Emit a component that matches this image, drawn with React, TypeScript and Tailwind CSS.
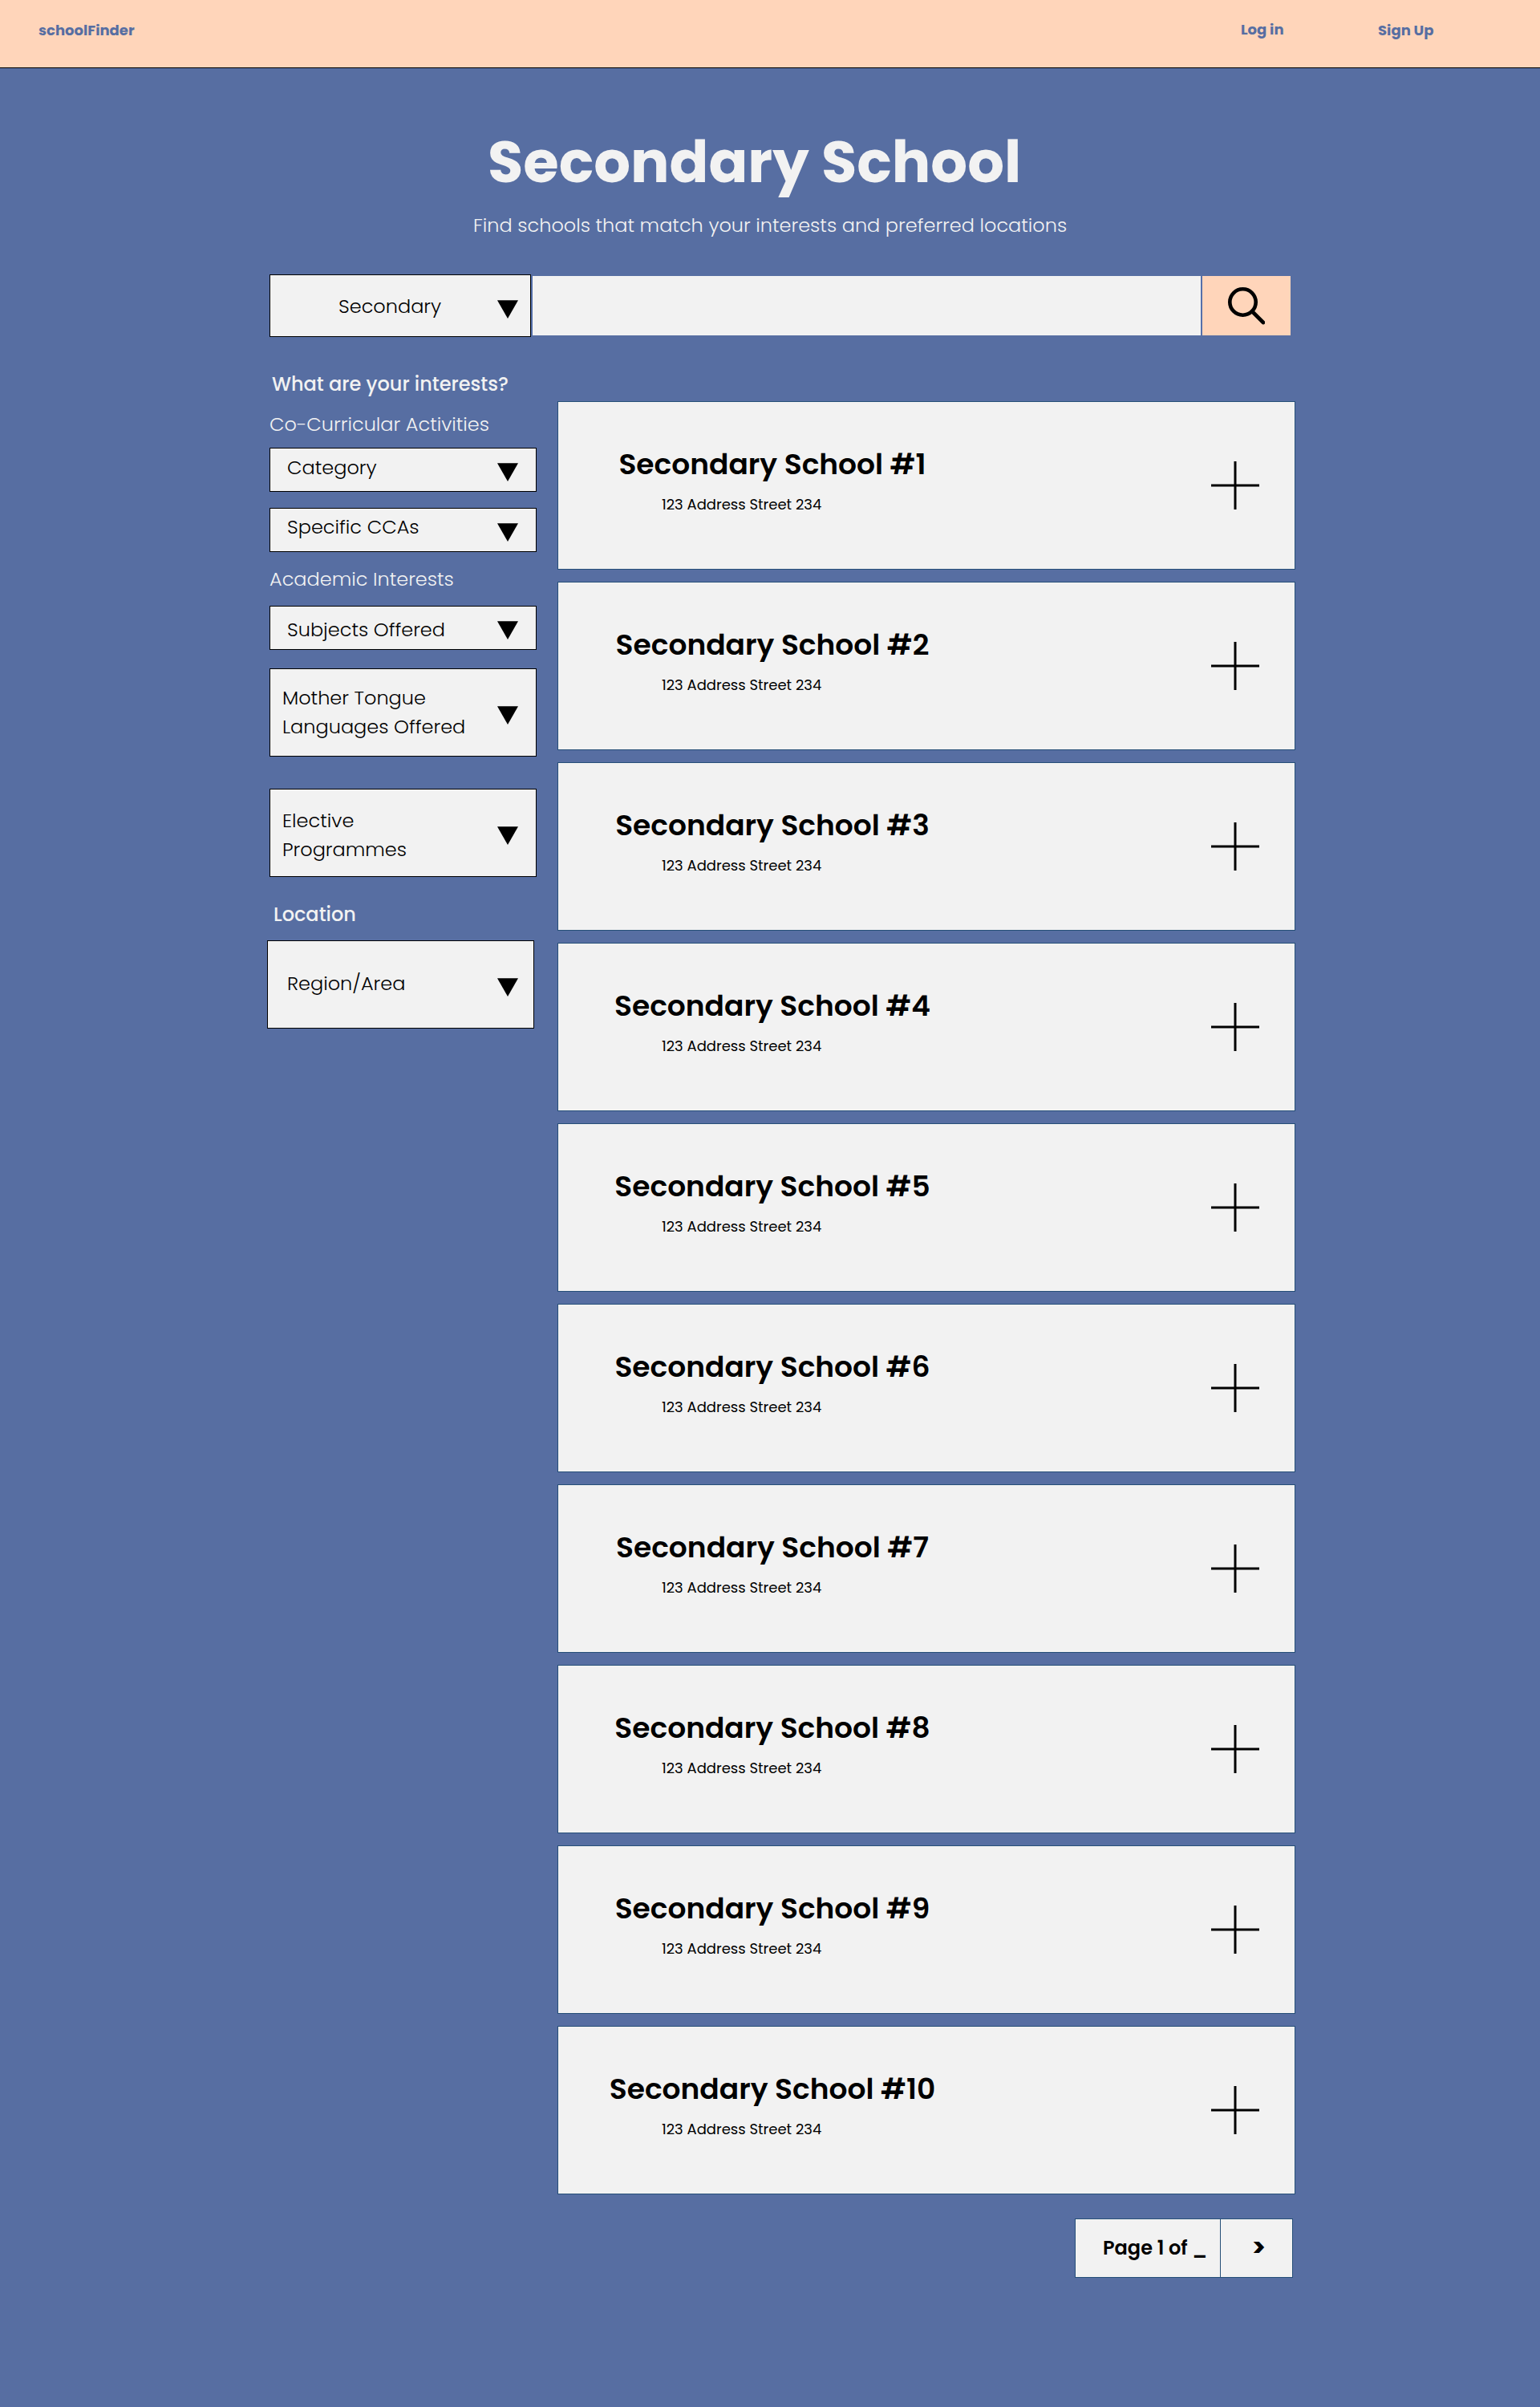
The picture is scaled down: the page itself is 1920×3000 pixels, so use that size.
import type { ReactNode } from "react";

function Triangle({ className = "" }: { className?: string }) {
  return (
    <svg className={`h-[23px] w-[26px] shrink-0 ${className}`} viewBox="0 0 26 23" aria-hidden="true">
      <path d="M0 0.3H26L13 23Z" fill="#000" />
    </svg>
  );
}

function Plus() {
  return (
    <svg className="mt-[74px] mr-11 size-[60px] shrink-0" viewBox="0 0 60 60" aria-hidden="true">
      <path d="M30 0V60M0 30H60" stroke="#000" strokeWidth="3" />
    </svg>
  );
}

function SelectBox({
  className,
  textClass,
  arrowClass,
  children,
}: {
  className: string;
  textClass: string;
  arrowClass: string;
  children: ReactNode;
}) {
  return (
    <button
      type="button"
      className={`flex items-start justify-between border border-black bg-[#f2f2f2] text-left text-2xl leading-9 font-light text-black ${className}`}
    >
      <span className={`whitespace-nowrap ${textClass}`}>{children}</span>
      <Triangle className={arrowClass} />
    </button>
  );
}

const schools = Array.from({ length: 10 }, (_, i) => `Secondary School #${i + 1}`);

function SchoolCard({ name }: { name: string }) {
  return (
    <article className="flex h-[210px] items-start justify-between border border-[#264f78] bg-[#f2f2f2] text-black">
      <div className="w-[534px] pt-[58px]">
        <h2 className="text-center text-4xl leading-10 font-semibold whitespace-nowrap">{name}</h2>
        <p className="mt-5 ml-[129px] text-lg leading-5 whitespace-nowrap">123 Address Street 234</p>
      </div>
      <Plus />
    </article>
  );
}

export default function App() {
  return (
    <div className="min-h-[3000px] w-[1920px] bg-[#576ea2] font-['Poppins','Inter',sans-serif]">
      <header className="flex h-[85px] items-start border-b border-black bg-[#ffd5ba] text-lg leading-[18px] font-bold text-[#576ea2]">
        <a className="mt-[29px] ml-12">schoolFinder</a>
        <nav className="mr-[132.5px] ml-auto flex items-start">
          <a className="mt-7 mr-[117.5px]">Log in</a>
          <a className="mt-[29px]">Sign Up</a>
        </nav>
      </header>

      <main>
        <h1 className="mt-[77px] ml-[608px] text-7xl leading-[80px] font-bold whitespace-nowrap text-[#f2f2f2]">
          Secondary School
        </h1>
        <p className="mt-[21px] ml-[590px] text-2xl leading-9 font-light whitespace-nowrap text-[#f2f2f2]">
          Find schools that match your interests and preferred locations
        </p>

        <form className="mt-[43px] ml-[336px] flex w-[1273px] items-center">
          <SelectBox
            className="h-[78px] w-[326px] pr-[15px] pl-[85px]"
            textClass="pt-[21px]"
            arrowClass="mt-[31px]"
          >
            Secondary
          </SelectBox>
          <div className="flex h-[74px] flex-1 gap-0.5 bg-[#5570aa] pl-0.5">
            <input
              type="text"
              aria-label="Search schools"
              className="min-w-0 flex-1 bg-[#f2f2f2] px-6 text-2xl text-black outline-none"
            />
            <button type="button" aria-label="Search" className="flex w-[110px] justify-center bg-[#ffd5ba] pt-[13px]">
              <svg className="-ml-0.5 size-[48px]" viewBox="0 0 48 48" fill="none" stroke="#000" aria-hidden="true">
                <circle cx="20.5" cy="19.5" r="16.2" strokeWidth="4.6" />
                <path d="M32 31L46 45" strokeWidth="4.6" strokeLinecap="round" />
              </svg>
            </button>
          </div>
        </form>

        <div className="ml-[333px] flex w-[1282px] items-start justify-between">
          <aside className="flex w-[336px] flex-col pt-[41px]">
            <h3 className="ml-1.5 text-2xl leading-9 font-medium whitespace-nowrap text-[#f2f2f2]">
              What are your interests?
            </h3>
            <p className="mt-3.5 ml-[3px] text-2xl leading-9 font-light whitespace-nowrap text-[#f2f2f2]">
              Co-Curricular Activities
            </p>
            <SelectBox
              className="mt-[11px] ml-[3px] h-[55px] pr-[22px] pl-[21px]"
              textClass="pt-1.5"
              arrowClass="mt-[18px]"
            >
              Category
            </SelectBox>
            <SelectBox
              className="mt-5 ml-[3px] h-[55px] pr-[22px] pl-[21px]"
              textClass="pt-[5px]"
              arrowClass="mt-[18px]"
            >
              Specific CCAs
            </SelectBox>

            <p className="mt-4 ml-[3px] text-2xl leading-9 font-light whitespace-nowrap text-[#f2f2f2]">
              Academic Interests
            </p>
            <SelectBox
              className="mt-[15px] ml-[3px] h-[55px] pr-[22px] pl-[21px]"
              textClass="pt-[11px]"
              arrowClass="mt-[18px]"
            >
              Subjects Offered
            </SelectBox>
            <SelectBox
              className="mt-[23px] ml-[3px] h-[110px] pr-[22px] pl-[15px]"
              textClass="pt-[18px]"
              arrowClass="mt-[46px]"
            >
              Mother Tongue
              <br />
              Languages Offered
            </SelectBox>
            <SelectBox
              className="mt-10 ml-[3px] h-[110px] pr-[22px] pl-[15px]"
              textClass="pt-[21px]"
              arrowClass="mt-[46px]"
            >
              Elective
              <br />
              Programmes
            </SelectBox>

            <h3 className="mt-[29px] ml-2 text-2xl leading-9 font-medium whitespace-nowrap text-[#f2f2f2]">
              Location
            </h3>
            <SelectBox
              className="mt-3.5 mr-[3px] h-[110px] pr-[19px] pl-6"
              textClass="pt-[35px]"
              arrowClass="mt-[46px]"
            >
              Region/Area
            </SelectBox>
          </aside>

          <section className="flex w-[920px] flex-col pt-20">
            <div className="flex flex-col gap-[15px]">
              {schools.map((name) => (
                <SchoolCard key={name} name={name} />
              ))}
            </div>

            <div className="mt-[30px] mr-[3px] flex h-[74px] w-[272px] self-end border border-[#264f78] bg-[#f2f2f2] text-2xl leading-9 font-semibold text-black">
              <div className="flex w-[181px] items-center border-r border-[#264f78] pl-[34px] whitespace-nowrap">
                Page 1 of _
              </div>
              <button
                type="button"
                aria-label="Next page"
                className="flex flex-1 items-center justify-center pb-0.5 pl-1.5 text-[32px] font-bold"
              >
                &gt;
              </button>
            </div>
          </section>
        </div>
      </main>
    </div>
  );
}
